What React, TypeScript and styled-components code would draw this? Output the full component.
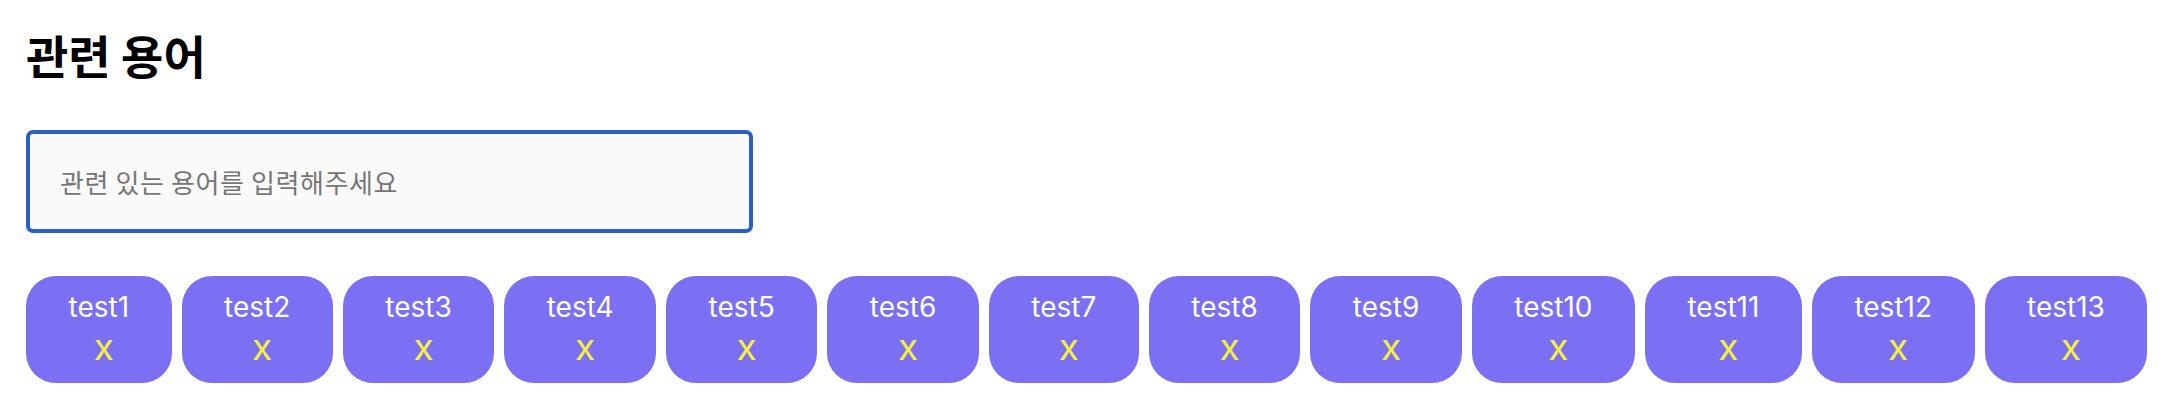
import { FC } from 'react';
import styled, { createGlobalStyle } from 'styled-components';

const GlobalStyle = createGlobalStyle`
  body {
    margin: 0;
    background: #ffffff;
    font-family: 'Noto Sans CJK KR', 'Noto Sans', sans-serif;
  }
`;

const Section = styled.section`
  display: flex;
  flex-direction: column;
  padding: 22px 20px 0 26px;
`;

const Title = styled.h2`
  margin: 0;
  font-size: 46px;
  font-weight: 700;
  line-height: 64px;
  color: #000;
`;

const TermInput = styled.input`
  box-sizing: border-box;
  width: 727px;
  height: 103px;
  margin-top: 44px;
  padding: 0 30px;
  border: 4px solid #2b5fc7;
  border-radius: 7px;
  background: #fafafa;
  font-family: inherit;
  font-size: 26px;
  letter-spacing: 0.6px;
  color: #333;
  outline: none;
  &::placeholder {
    color: #767676;
  }
`;

const ChipList = styled.ul`
  display: flex;
  gap: 10px;
  margin: 43px 0 0;
  padding: 0;
  list-style: none;
`;

const Chip = styled.li`
  display: flex;
  flex-direction: column;
  align-items: center;
  box-sizing: border-box;
  height: 107px;
  padding: 14px 42.5px 0;
  border-radius: 30px;
  background: #7b6ff4;
  font-family: Inter, 'Noto Sans', sans-serif;
`;

const ChipLabel = styled.span`
  font-size: 28px;
  line-height: normal;
  color: #ffffff;
`;

const RemoveButton = styled.button`
  margin: 0 0 0 10px;
  padding: 0;
  border: none;
  background: transparent;
  font-family: inherit;
  font-size: 37px;
  line-height: normal;
  color: #f6f03e;
  cursor: pointer;
`;

const terms = Array.from({ length: 13 }, (_, i) => `test${i + 1}`);

const App: FC = () => {
  return (
    <>
      <GlobalStyle />
      <Section>
        <Title>관련 용어</Title>
        <TermInput placeholder="관련 있는 용어를 입력해주세요" />
        <ChipList>
          {terms.map(term => (
            <Chip key={term}>
              <ChipLabel>{term}</ChipLabel>
              <RemoveButton type="button">x</RemoveButton>
            </Chip>
          ))}
        </ChipList>
      </Section>
    </>
  );
};

export default App;
